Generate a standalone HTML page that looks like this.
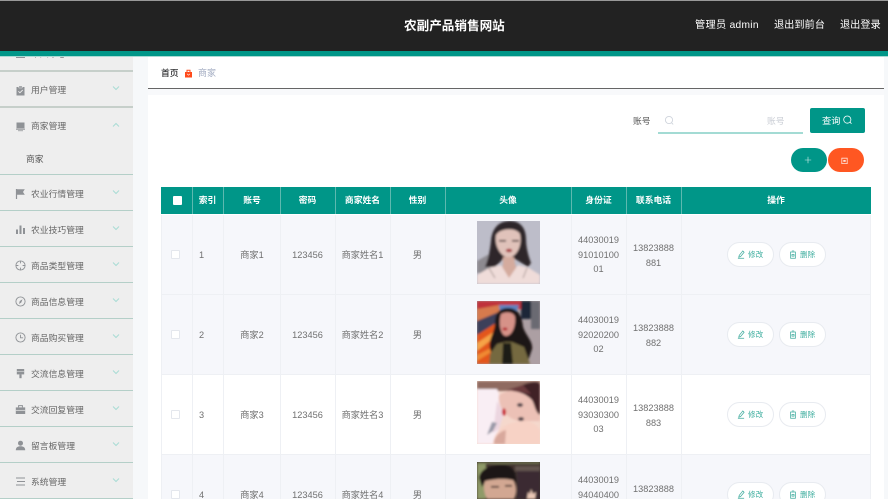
<!DOCTYPE html>
<html lang="zh">
<head>
<meta charset="utf-8">
<title>农副产品销售网站</title>
<style>
html,body{margin:0;padding:0;width:888px;height:499px;overflow:hidden;background:#f6f8fa}
body{position:relative;font-family:"Liberation Sans","Noto Sans CJK SC",sans-serif;color:#666}
div,span,svg{position:absolute}
#w{left:0;top:0;width:888px;height:499px;overflow:hidden;filter:blur(.3px)}
.t{white-space:nowrap;line-height:14px}
.hd{background:#222;left:0;top:0;width:888px;height:51px;border-top:1px solid #999;box-sizing:border-box}
.tl{left:0;top:51px;width:888px;height:4.5px;background:#009688}
.tl2{left:0;top:55.5px;width:888px;height:1px;background:#a9d9d3}
.side{left:0;top:56px;width:133px;height:443px;background:#eee;overflow:hidden}
.ln{left:0;width:133px;height:1px;background:#b4cfc8}
.m{font-size:8.8px;color:#666;left:31px}
.ic{left:15px;width:11px;height:11px}
.ar{left:111px;width:10px;height:6px}
.th{top:187px;height:27px;background:#009688;color:#fff;font-size:8.8px;font-weight:bold;line-height:27px;text-align:center}
.sep{background:#5db9af;width:1px;top:187px;height:27px}
.row{left:161px;width:710px;height:80px}
.vl{width:1px;background:#eef0f4;top:215px;height:284px}
.hl{left:161px;width:710px;height:1px;background:#eef0f4}
.td{font-size:9.2px;color:#707070;text-align:center;white-space:nowrap;line-height:14.5px}
.cb{left:171px;width:9px;height:9px;box-sizing:border-box;background:#fff;border:1px solid #e4e7ed;border-radius:1px}
.btn{height:25px;background:#fff;border:1px solid #e8ebf0;border-radius:13px;box-sizing:border-box;color:#3fae9f;font-size:7.6px;line-height:23px;white-space:nowrap}
.btn svg{top:7px}
.btn b{position:absolute;font-weight:normal}
</style>
</head>
<body>
<div id="w">

<div style="left:133px;top:56px;width:15px;height:443px;background:#f6f8fa"></div>
<div style="left:148px;top:56px;width:736px;height:443px;background:#fff"></div>
<div style="left:148px;top:88px;width:736px;height:1px;background:#666"></div>
<div style="left:148px;top:89px;width:736px;height:6px;background:#f8f9fb"></div>

<!-- sidebar -->
<div class="side">
  <div class="t" style="left:31px;top:-9px;font-size:8.8px;color:#666">个人中心</div>
  <div style="left:16px;top:-5px;width:9px;height:7px;background:#8f9296"></div>
</div>
<div class="ln" style="top:70px;height:2px;background:#c6cfca"></div>
<div class="ln" style="top:106px;height:2px;background:#c6cfca"></div>
<div class="ln" style="top:174px"></div>
<div class="ln" style="top:210px"></div>
<div class="ln" style="top:246px"></div>
<div class="ln" style="top:282px"></div>
<div class="ln" style="top:318px"></div>
<div class="ln" style="top:354px"></div>
<div class="ln" style="top:390px"></div>
<div class="ln" style="top:426px"></div>
<div class="ln" style="top:462px"></div>
<div class="ln" style="top:498px"></div>

<div class="t m" style="top:83px">用户管理</div>
<div class="t m" style="top:119px">商家管理</div>
<div class="t" style="left:26px;top:152px;font-size:8.8px;color:#555">商家</div>
<div class="t m" style="top:187px">农业行情管理</div>
<div class="t m" style="top:223px">农业技巧管理</div>
<div class="t m" style="top:259px">商品类型管理</div>
<div class="t m" style="top:295px">商品信息管理</div>
<div class="t m" style="top:331px">商品购买管理</div>
<div class="t m" style="top:367px">交流信息管理</div>
<div class="t m" style="top:403px">交流回复管理</div>
<div class="t m" style="top:439px">留言板管理</div>
<div class="t m" style="top:475px">系统管理</div>

<!-- sidebar icons -->
<svg class="ic" style="top:85px" viewBox="0 0 11 11"><path d="M1.500 2h8v8.500h-8z" fill="#8f9296"/><path d="M3.800 1h3.400v2H3.800z" fill="#8f9296" stroke="#eee" stroke-width=".5"/><path d="M3.400 6.300l1.500 1.500 2.800-2.800" fill="none" stroke="#eee" stroke-width=".9"/></svg>
<svg class="ic" style="top:121px" viewBox="0 0 11 11"><path d="M1.500 1.500h8v5.800h-8z" fill="#8f9296"/><path d="M1 7.700h9v1H1z" fill="#8f9296"/><path d="M3 9.200h5v1H3z" fill="#a5a8ab"/></svg>
<svg class="ic" style="top:188px" viewBox="0 0 11 11"><path d="M1.500 1v10" stroke="#8f9296" stroke-width="1.200"/><path d="M2 1.300h7.800L8 4l1.800 2.800H2z" fill="#8f9296"/></svg>
<svg class="ic" style="top:224px" viewBox="0 0 11 11"><path d="M1 5.500h2V10H1zM4.500 1.500h2V10h-2zM8 4h2v6H8z" fill="#8f9296"/></svg>
<svg class="ic" style="top:260px" viewBox="0 0 11 11"><circle cx="5.500" cy="5.500" r="4.600" fill="none" stroke="#8f9296" stroke-width=".9"/><path d="M5.500 1v2.400M5.500 7.600V10M1 5.500h2.400M7.600 5.500H10" stroke="#8f9296" stroke-width=".9"/></svg>
<svg class="ic" style="top:296px" viewBox="0 0 11 11"><circle cx="5.500" cy="5.500" r="4.600" fill="none" stroke="#8f9296" stroke-width=".9"/><path d="M7.500 3.200L6.300 6.500 4 8l.8-3z" fill="#8f9296"/></svg>
<svg class="ic" style="top:332px" viewBox="0 0 11 11"><circle cx="5.500" cy="5.500" r="4.600" fill="none" stroke="#8f9296" stroke-width=".9"/><path d="M5.500 2.800v3h2.600" fill="none" stroke="#8f9296" stroke-width=".9"/></svg>
<svg class="ic" style="top:368px" viewBox="0 0 11 11"><path d="M1.800 1h7.400v5.400H1.800z" fill="#8f9296"/><path d="M4.400 6.400h2.200v3.800H4.400z" fill="#8f9296"/><path d="M1.800 3.600h7.400" stroke="#eee" stroke-width=".5"/></svg>
<svg class="ic" style="top:404px" viewBox="0 0 11 11"><path d="M.8 3.400h9.400v6.600H.8z" fill="#8f9296"/><path d="M3.600 3.400V1.600h3.800v1.800" fill="none" stroke="#8f9296"/><path d="M.8 6.300h9.400" stroke="#eee" stroke-width=".7"/></svg>
<svg class="ic" style="top:440px" viewBox="0 0 11 11"><circle cx="5.500" cy="3.200" r="2.500" fill="#8f9296"/><path d="M.8 10.200c0-3 2-4 4.700-4s4.700 1 4.700 4z" fill="#8f9296"/></svg>
<svg class="ic" style="top:476px" viewBox="0 0 11 11"><path d="M1 2h9M2 5.500h8M1 9h9" stroke="#8f9296" stroke-width="1"/></svg>

<!-- arrows -->
<svg class="ar" style="top:85px" viewBox="0 0 10 6"><path d="M2 1.500l3 3 3-3" fill="none" stroke="#a9dcd5" stroke-width="1"/></svg>
<svg class="ar" style="top:122px" viewBox="0 0 10 6"><path d="M2 4.500l3-3 3 3" fill="none" stroke="#a9dcd5" stroke-width="1"/></svg>
<svg class="ar" style="top:189px" viewBox="0 0 10 6"><path d="M2 1.500l3 3 3-3" fill="none" stroke="#a9dcd5" stroke-width="1"/></svg>
<svg class="ar" style="top:225px" viewBox="0 0 10 6"><path d="M2 1.500l3 3 3-3" fill="none" stroke="#a9dcd5" stroke-width="1"/></svg>
<svg class="ar" style="top:261px" viewBox="0 0 10 6"><path d="M2 1.500l3 3 3-3" fill="none" stroke="#a9dcd5" stroke-width="1"/></svg>
<svg class="ar" style="top:297px" viewBox="0 0 10 6"><path d="M2 1.500l3 3 3-3" fill="none" stroke="#a9dcd5" stroke-width="1"/></svg>
<svg class="ar" style="top:333px" viewBox="0 0 10 6"><path d="M2 1.500l3 3 3-3" fill="none" stroke="#a9dcd5" stroke-width="1"/></svg>
<svg class="ar" style="top:369px" viewBox="0 0 10 6"><path d="M2 1.500l3 3 3-3" fill="none" stroke="#a9dcd5" stroke-width="1"/></svg>
<svg class="ar" style="top:405px" viewBox="0 0 10 6"><path d="M2 1.500l3 3 3-3" fill="none" stroke="#a9dcd5" stroke-width="1"/></svg>
<svg class="ar" style="top:441px" viewBox="0 0 10 6"><path d="M2 1.500l3 3 3-3" fill="none" stroke="#a9dcd5" stroke-width="1"/></svg>
<svg class="ar" style="top:477px" viewBox="0 0 10 6"><path d="M2 1.500l3 3 3-3" fill="none" stroke="#a9dcd5" stroke-width="1"/></svg>

<!-- header -->
<div class="hd"></div>
<div class="tl"></div>
<div class="tl2"></div>
<div class="t" style="left:404px;top:19px;font-size:12.6px;font-weight:bold;color:#fff">农副产品销售网站</div>
<div class="t" style="left:695px;top:19px;font-size:10.2px;color:#fff;letter-spacing:.3px">管理员 admin</div>
<div class="t" style="left:774px;top:19px;font-size:10.2px;color:#fff">退出到前台</div>
<div class="t" style="left:840px;top:19px;font-size:10.2px;color:#fff">退出登录</div>

<!-- breadcrumb -->
<div class="t" style="left:161px;top:66px;font-size:8.8px;color:#303133;font-weight:500">首页</div>
<svg style="left:184px;top:69px;width:9px;height:9px" viewBox="0 0 9 9"><path d="M1 3h7v5.500H1z" fill="#ff4a1a"/><path d="M3 3V1.200h3V3" fill="none" stroke="#ff4a1a"/><path d="M3 4.800l1.500 1.400L6 4.800" fill="none" stroke="#fff" stroke-width=".6"/></svg>
<div class="t" style="left:198px;top:66px;font-size:9px;color:#a3acc2">商家</div>

<!-- search -->
<div class="t" style="left:633px;top:114px;font-size:8.8px;color:#555">账号</div>
<svg style="left:664px;top:115px;width:11px;height:11px" viewBox="0 0 11 11"><circle cx="5" cy="5" r="3.600" fill="none" stroke="#cfd4dc" stroke-width=".9"/><path d="M7.600 7.800l1.600 1.600" stroke="#cfd4dc" stroke-width=".9"/></svg>
<div class="t" style="left:767px;top:114px;font-size:8.8px;color:#c9cdd4">账号</div>
<div style="left:658px;top:132px;width:145px;height:1.500px;background:#a3dbd4"></div>
<div style="left:810px;top:108px;width:55px;height:25px;background:#009688;border-radius:2px"></div>
<div class="t" style="left:822px;top:114px;font-size:9.3px;color:#fff">查询</div>
<svg style="left:842px;top:114px;width:11px;height:12px" viewBox="0 0 11 12"><circle cx="5.300" cy="5.600" r="3.600" fill="none" stroke="#fff" stroke-width=".8"/><path d="M8 8.200l1.500 1.500" stroke="#fff" stroke-width=".8"/></svg>

<div style="left:791px;top:148px;width:36px;height:24px;background:#009688;border-radius:12px"></div>
<svg style="left:803px;top:155px;width:10px;height:10px" viewBox="0 0 10 10"><path d="M5 1.800v6.400M1.800 5h6.400" stroke="#d5f0ec" stroke-width=".6"/></svg>
<div style="left:828px;top:148px;width:36px;height:24px;background:#ff5722;border-radius:12px"></div>
<svg style="left:841px;top:156.500px;width:7px;height:7px" viewBox="0 0 7 7"><path d="M.8 1.200h5.400v5.400H.8z" fill="none" stroke="#ffe3da" stroke-width=".8"/><path d="M2.300 3h2.400v1.800H2.300z" fill="#ffe3da"/></svg>

<!-- table header -->
<div class="th" style="left:161px;width:710px"></div>
<div style="left:173px;top:196px;width:9px;height:9px;background:#fff;border-radius:1px"></div>
<div class="th" style="left:192px;width:31px">索引</div>
<div class="th" style="left:224px;width:56px">账号</div>
<div class="th" style="left:280px;width:55px">密码</div>
<div class="th" style="left:335px;width:55px">商家姓名</div>
<div class="th" style="left:390px;width:55px">性别</div>
<div class="th" style="left:445px;width:126px">头像</div>
<div class="th" style="left:571px;width:55px">身份证</div>
<div class="th" style="left:626px;width:55px">联系电话</div>
<div class="th" style="left:681px;width:190px">操作</div>
<div class="sep" style="left:192px"></div>
<div class="sep" style="left:223px"></div>
<div class="sep" style="left:280px"></div>
<div class="sep" style="left:335px"></div>
<div class="sep" style="left:390px"></div>
<div class="sep" style="left:445px"></div>
<div class="sep" style="left:571px"></div>
<div class="sep" style="left:626px"></div>
<div class="sep" style="left:681px"></div>

<!-- rows -->
<div class="row" style="top:215px;background:#f6f7fb"></div>
<div class="row" style="top:295px;background:#f6f7fb"></div>
<div class="row" style="top:375px;background:#fff"></div>
<div class="row" style="top:455px;height:44px;background:#f6f7fb"></div>
<div class="hl" style="top:294px"></div>
<div class="hl" style="top:374px"></div>
<div class="hl" style="top:454px"></div>
<div class="vl" style="left:161px"></div>
<div class="vl" style="left:192px"></div>
<div class="vl" style="left:223px"></div>
<div class="vl" style="left:280px"></div>
<div class="vl" style="left:335px"></div>
<div class="vl" style="left:390px"></div>
<div class="vl" style="left:445px"></div>
<div class="vl" style="left:571px"></div>
<div class="vl" style="left:626px"></div>
<div class="vl" style="left:681px"></div>
<div class="vl" style="left:870px"></div>

<!-- row 1 -->
<div class="cb" style="top:250px"></div>
<div class="td" style="left:199px;top:248px">1</div>
<div class="td" style="left:224px;width:56px;top:248px">商家1</div>
<div class="td" style="left:280px;width:55px;top:248px">123456</div>
<div class="td" style="left:335px;width:55px;top:248px">商家姓名1</div>
<div class="td" style="left:390px;width:55px;top:248px">男</div>
<div class="td" style="left:571px;width:55px;top:233px">44030019<br>91010100<br>01</div>
<div class="td" style="left:626px;width:55px;top:241px">13823888<br>881</div>

<!-- row 2 -->
<div class="cb" style="top:330px"></div>
<div class="td" style="left:199px;top:328px">2</div>
<div class="td" style="left:224px;width:56px;top:328px">商家2</div>
<div class="td" style="left:280px;width:55px;top:328px">123456</div>
<div class="td" style="left:335px;width:55px;top:328px">商家姓名2</div>
<div class="td" style="left:390px;width:55px;top:328px">男</div>
<div class="td" style="left:571px;width:55px;top:313px">44030019<br>92020200<br>02</div>
<div class="td" style="left:626px;width:55px;top:321px">13823888<br>882</div>

<!-- row 3 -->
<div class="cb" style="top:410px"></div>
<div class="td" style="left:199px;top:408px">3</div>
<div class="td" style="left:224px;width:56px;top:408px">商家3</div>
<div class="td" style="left:280px;width:55px;top:408px">123456</div>
<div class="td" style="left:335px;width:55px;top:408px">商家姓名3</div>
<div class="td" style="left:390px;width:55px;top:408px">男</div>
<div class="td" style="left:571px;width:55px;top:393px">44030019<br>93030300<br>03</div>
<div class="td" style="left:626px;width:55px;top:401px">13823888<br>883</div>

<!-- row 4 -->
<div class="cb" style="top:490px"></div>
<div class="td" style="left:199px;top:488px">4</div>
<div class="td" style="left:224px;width:56px;top:488px">商家4</div>
<div class="td" style="left:280px;width:55px;top:488px">123456</div>
<div class="td" style="left:335px;width:55px;top:488px">商家姓名4</div>
<div class="td" style="left:390px;width:55px;top:488px">男</div>
<div class="td" style="left:571px;width:55px;top:473px">44030019<br>94040400</div>
<div class="td" style="left:626px;width:55px;top:482px">13823888</div>

<!-- photo 1 -->
<svg style="left:477px;top:221px;width:63px;height:63px" viewBox="0 0 63 63">
<defs><filter id="b" x="-10%" y="-10%" width="120%" height="120%"><feGaussianBlur stdDeviation="1"/></filter><clipPath id="cp"><rect width="63" height="63"/></clipPath></defs>
<g clip-path="url(#cp)"><rect width="63" height="63" fill="#bdbdc9"/>
<g filter="url(#b)">
<path d="M0 40l14-8 0 20H0z" fill="#8d8a90"/>
<path d="M33 0C22 0 15 7 14 20c-1 9-2 16-6 26l10 0c3-3 6-6 8-8h12c4 2 8 5 13 8l3-4c-3-8-5-16-5-24C49 8 44 0 33 0z" fill="#2e2729"/>
<path d="M19 14c4-7 20-8 24-1 2 9-1 21-11 24-8-1-15-12-13-23z" fill="#e0c2ba"/>
<path d="M26 36h11l1 7 3 8-9 10-8-10 2-8z" fill="#d4ab9e"/>
<path d="M22 19h7v1.600h-7zM35 19h7v1.600h-7z" fill="#4a3437"/>
<ellipse cx="32" cy="29.500" rx="3.200" ry="1.800" fill="#a83a40"/>
<path d="M0 63V54l12-7 12-3 8 13 9-13 11 3 11 7v9z" fill="#efdcd9"/>
<path d="M12 47l6 10M50 47l-4 10" stroke="#a99894" stroke-width="1"/>
</g></g>
</svg>

<!-- photo 2 -->
<svg style="left:477px;top:301px;width:63px;height:63px" viewBox="0 0 63 63">
<defs><clipPath id="cp2"><rect width="63" height="63"/></clipPath></defs>
<g clip-path="url(#cp2)"><rect width="63" height="63" fill="#ac9fa3"/>
<g filter="url(#b)">
<path d="M0 0h46v8H0z" fill="#c0303a"/><path d="M0 8l22-4 8 6L0 22z" fill="#d77a4e"/><path d="M22 4h20l-6 16H24z" fill="#5f84c0"/>
<path d="M0 20l24-10v10L0 36z" fill="#3e3f5a"/><path d="M0 34l22-14v43H0z" fill="#e3561d"/><path d="M0 42l18-12v6L0 50z" fill="#f6a346"/><path d="M0 54l16-8v4L0 60z" fill="#f08a30"/>
<path d="M44 0h19v18H44z" fill="#1f2638"/><path d="M54 0h9v28h-9z" fill="#6b6a72"/>
<path d="M31 7c-9 0-13 6-13 14 0 11-7 17-5 27l5 15h32l5-15c1-8-6-13-9-22-1-11-5-19-15-19z" fill="#1d1719"/>
<path d="M24 13c5-3 13-2 14 3 1 9-3 19-9 19-5 0-8-12-5-22z" fill="#d69288"/>
<ellipse cx="28" cy="28" rx="2.500" ry="1.500" fill="#b41f2b"/>
<path d="M13 53l7-10 8-2 7 0 12 5 6 17H12z" fill="#74693f"/><path d="M26 42l8 0 2 21H25z" fill="#1e1a17"/>
</g></g>
</svg>

<!-- photo 3 -->
<svg style="left:477px;top:381px;width:63px;height:63px" viewBox="0 0 63 63">
<defs><clipPath id="cp3"><rect width="63" height="63"/></clipPath></defs>
<g clip-path="url(#cp3)"><rect width="63" height="63" fill="#f5d8cc"/>
<g filter="url(#b)">
<path d="M0 0h63v10H0z" fill="#8f6a60"/>
<path d="M0 8h20l8 20-4 12-6 23H0z" fill="#f9eef4"/>
<path d="M20 20l7 12-5 16-6 4z" fill="#ecd6e0"/>
<path d="M22 14c10-7 41-9 41 6v20H42C30 38 20 26 22 14z" fill="#ecc1b6"/>
<path d="M36 10c8-8 27-12 27-6v30c-5-3-5-10-8-15-6-6-12-8-19-9z" fill="#3f2228"/>
<path d="M30 9l16-5 8 9-12-2z" fill="#6a3a3e"/>
<ellipse cx="27" cy="31" rx="2" ry="3.800" fill="#cb2a36"/>
<ellipse cx="43" cy="24" rx="3" ry="2" fill="#54464d"/><ellipse cx="44" cy="38" rx="3" ry="2" fill="#54464d"/>
<path d="M16 63c1-12 10-21 30-23 8 0 17 5 17 11v12z" fill="#f7d2c5"/>
<path d="M17 60c2-6 7-10 12-11l-1 14H17z" fill="#d8a89c"/>
<path d="M20 42l-4 8-6 4 5-13z" fill="#9a9aa8"/>
</g></g>
</svg>

<!-- photo 4 -->
<svg style="left:477px;top:462px;width:63px;height:37px" viewBox="0 0 63 37">
<defs><clipPath id="cp4"><rect width="63" height="37"/></clipPath></defs>
<g clip-path="url(#cp4)"><rect width="63" height="37" fill="#41332f"/>
<g filter="url(#b)">
<rect width="63" height="2" fill="#737a52"/><rect y="2" width="9" height="35" fill="#8f9a68"/>
<path d="M38 4h25v5H38z" fill="#64554f"/><path d="M40 9h23v28H40z" fill="#3a2c30"/>
<path d="M2 16C3 6 16 2 28 3c8 1 12 8 11 17l-4 3-10-4-17 1-3 5z" fill="#1c1718"/>
<path d="M8 19c9-2 18-3 28-1 5 7 3 15 1 19H10C7 31 6 25 8 19z" fill="#d2a792"/>
<path d="M14 24h8v1.600h-8zM28 23h7v1.600h-7z" fill="#3a2826"/>
<path d="M50 37l1-7 2 2 1-5 2 5 3-2-1 7z" fill="#e9c7b5"/>
</g></g>
</svg>

<!-- buttons -->
<div class="btn" style="left:727px;top:242px;width:47px"><svg style="left:9px;width:8px;height:9px" viewBox="0 0 9 10"><path d="M6.500 1L2.500 6 2 8l2-.7L8 2.500zM1 9.200h7" fill="none" stroke="#3aa99b" stroke-width=".8"/></svg><b style="left:20px">修改</b></div>
<div class="btn" style="left:779px;top:242px;width:47px"><svg style="left:9px;width:8px;height:9px" viewBox="0 0 9 10"><path d="M1.800 2.200h5.400v7H1.800zM3.200 1h2.600M3.300 5h2.400v1.800H3.300z" fill="none" stroke="#3aa99b" stroke-width=".8"/></svg><b style="left:20px">删除</b></div>
<div class="btn" style="left:727px;top:322px;width:47px"><svg style="left:9px;width:8px;height:9px" viewBox="0 0 9 10"><path d="M6.500 1L2.500 6 2 8l2-.7L8 2.500zM1 9.200h7" fill="none" stroke="#3aa99b" stroke-width=".8"/></svg><b style="left:20px">修改</b></div>
<div class="btn" style="left:779px;top:322px;width:47px"><svg style="left:9px;width:8px;height:9px" viewBox="0 0 9 10"><path d="M1.800 2.200h5.400v7H1.800zM3.200 1h2.600M3.300 5h2.400v1.800H3.300z" fill="none" stroke="#3aa99b" stroke-width=".8"/></svg><b style="left:20px">删除</b></div>
<div class="btn" style="left:727px;top:402px;width:47px"><svg style="left:9px;width:8px;height:9px" viewBox="0 0 9 10"><path d="M6.500 1L2.500 6 2 8l2-.7L8 2.500zM1 9.200h7" fill="none" stroke="#3aa99b" stroke-width=".8"/></svg><b style="left:20px">修改</b></div>
<div class="btn" style="left:779px;top:402px;width:47px"><svg style="left:9px;width:8px;height:9px" viewBox="0 0 9 10"><path d="M1.800 2.200h5.400v7H1.800zM3.200 1h2.600M3.300 5h2.400v1.800H3.300z" fill="none" stroke="#3aa99b" stroke-width=".8"/></svg><b style="left:20px">删除</b></div>
<div class="btn" style="left:727px;top:482px;width:47px"><svg style="left:9px;width:8px;height:9px" viewBox="0 0 9 10"><path d="M6.500 1L2.500 6 2 8l2-.7L8 2.500zM1 9.200h7" fill="none" stroke="#3aa99b" stroke-width=".8"/></svg><b style="left:20px">修改</b></div>
<div class="btn" style="left:779px;top:482px;width:47px"><svg style="left:9px;width:8px;height:9px" viewBox="0 0 9 10"><path d="M1.800 2.200h5.400v7H1.800zM3.200 1h2.600M3.300 5h2.400v1.800H3.300z" fill="none" stroke="#3aa99b" stroke-width=".8"/></svg><b style="left:20px">删除</b></div>

</div>
</body>
</html>
